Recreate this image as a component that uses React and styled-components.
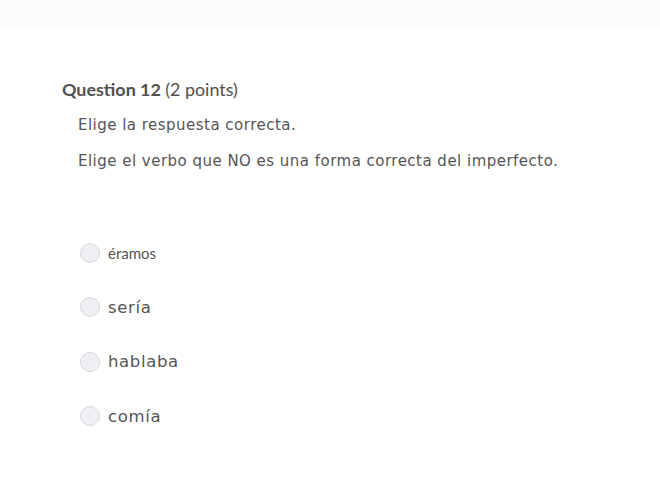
import React from 'react';
import styled, { createGlobalStyle } from 'styled-components';

const GlobalStyle = createGlobalStyle`
  body {
    margin: 0;
    background: #ffffff;
  }
`;

const Page = styled.div`
  width: 660px;
  height: 477px;
  background: #ffffff;
  overflow: hidden;
`;

const TopBand = styled.div`
  height: 28px;
  background: #fbfcfb;
`;

const Question = styled.section`
  padding: 50px 0 0 62px;
`;

const Title = styled.h2`
  margin: 0;
  font-family: Lato, "Open Sans", sans-serif;
  font-size: 17.9px;
  font-weight: 700;
  color: #505050;
  line-height: 22px;

  span {
    font-weight: 400;
  }
`;

const Prompt = styled.p`
  margin: ${(p) => p.$top}px 0 0 16px;
  font-family: "DejaVu Sans", "Liberation Sans", sans-serif;
  font-size: 15px;
  color: #555555;
  line-height: 20px;
  letter-spacing: 0.48px;
`;

const Options = styled.div`
  display: flex;
  flex-direction: column;
  gap: 34.4px;
  margin: 72px 0 0 18px;
`;

const Option = styled.label`
  display: flex;
  align-items: center;
  gap: 8px;
  height: 20px;
`;

const Radio = styled.span`
  width: 20px;
  height: 20px;
  box-sizing: border-box;
  border-radius: 50%;
  border: 1px solid #d6d8dc;
  background: #eff0f4;
`;

const Label = styled.span`
  font-family: ${(p) => (p.$small ? 'Lato, sans-serif' : '"DejaVu Sans", sans-serif')};
  font-size: ${(p) => (p.$small ? 15 : 16.5)}px;
  color: #555555;
  letter-spacing: ${(p) => (p.$small ? 0 : 0.65)}px;
`;

const answers = [
  { text: 'éramos', small: true },
  { text: 'sería' },
  { text: 'hablaba' },
  { text: 'comía' },
];

export default function App() {
  return (
    <Page>
      <GlobalStyle />
      <TopBand />
      <Question>
        <Title>
          Question 12 <span>(2 points)</span>
        </Title>
        <Prompt $top={15}>Elige la respuesta correcta.</Prompt>
        <Prompt $top={16}>Elige el verbo que NO es una forma correcta del imperfecto.</Prompt>
        <Options>
          {answers.map((a) => (
            <Option key={a.text}>
              <Radio />
              <Label $small={a.small}>{a.text}</Label>
            </Option>
          ))}
        </Options>
      </Question>
    </Page>
  );
}
